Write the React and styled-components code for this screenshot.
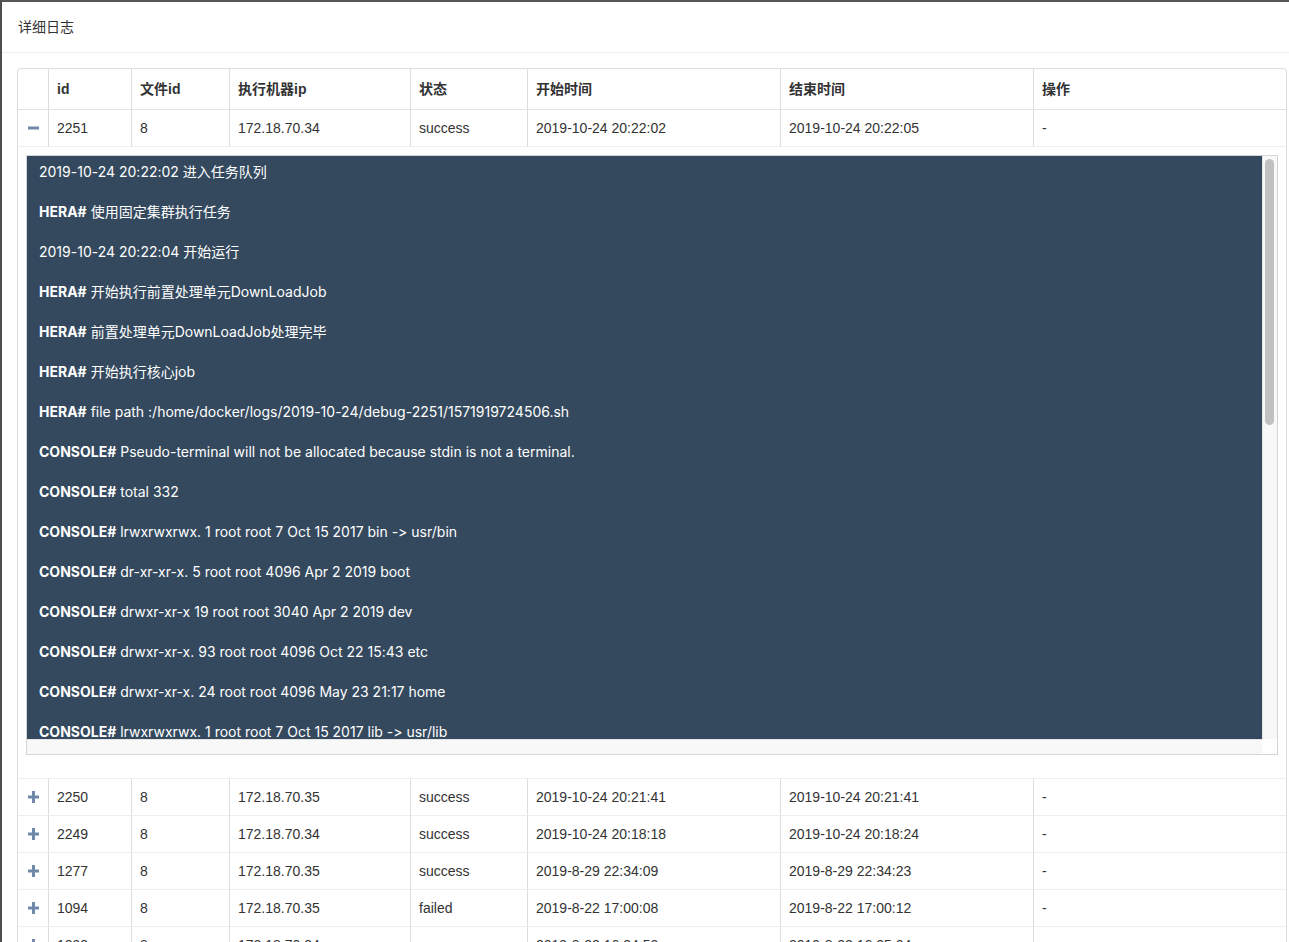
import React from "react";
import styled, { createGlobalStyle } from "styled-components";

const Global = createGlobalStyle`
  html, body { margin: 0; padding: 0; height: 100%; overflow: hidden; background: #fff; }
  body { font-family: "Liberation Sans", "Noto Sans CJK SC", Arial, sans-serif; color: #333; }
  #root { height: 100%; }
`;

const Frame = styled.div`
  height: 100%;
  box-sizing: border-box;
  border-top: 2px solid #565656;
  border-left: 2px solid #4e4e4e;
  display: flex;
  flex-direction: column;
`;

const Header = styled.div`
  padding: 15px 16px;
  line-height: 20px;
  font-size: 14px;
  color: #333;
  border-bottom: 1px solid #eeeeee;
`;

const Body = styled.div`
  padding: 15px 2px 0 15px;
`;

const TableWrap = styled.div`
  border: 1px solid #dddddd;
  border-radius: 4px;
  overflow: hidden;
`;

const Table = styled.table`
  width: 100%;
  table-layout: fixed;
  border-collapse: separate;
  border-spacing: 0;
  font-size: 14px;
  color: #333;
`;

const Th = styled.th`
  text-align: left;
  font-weight: bold;
  padding: 10px 8px;
  line-height: 20px;
  border-bottom: 1px solid #e2e2e2;
  border-left: ${(p) => (p.$first ? "none" : "1px solid #dddddd")};
  white-space: nowrap;
`;

const Td = styled.td`
  padding: 8px;
  line-height: 20px;
  border-bottom: 1px solid #eeeeee;
  border-left: ${(p) => (p.$first ? "none" : "1px solid #dddddd")};
  white-space: nowrap;
  overflow: hidden;
  vertical-align: middle;
`;

const ToggleCell = styled(Td)`
  padding: 8px 0 8px 10px;
`;

const Toggle = styled.svg`
  display: block;
  width: 11px;
  height: 12px;
  fill: #7189a9;
`;

const DetailCell = styled.td`
  padding: 8px 8px 23px 8px;
  border-bottom: 1px solid #eeeeee;
`;

const LogBox = styled.div`
  height: 600px;
  box-sizing: border-box;
  border: 1px solid #d3d3d9;
  display: grid;
  grid-template-columns: 1fr 15px;
  grid-template-rows: 1fr 15px;
  background: #fff;
`;

const Viewport = styled.div`
  background: #34495e;
  overflow: hidden;
  padding: 6px 12px 0 12px;
  color: #fff;
  font-family: "Inter", "Noto Sans CJK SC", sans-serif;
  font-size: 14px;
  font-feature-settings: "calt" 0, "liga" 0;
  font-variant-ligatures: none;
`;

const VTrack = styled.div`
  background: #f8f8f8;
  border-left: 1px solid #e4e4e4;
  padding: 3px 3px 0 2px;
`;

const Thumb = styled.div`
  height: 266px;
  border-radius: 5px;
  background: #c1c1c1;
`;

const HTrack = styled.div`
  background: #f8f8f8;
  border-top: 1px solid #e4e4e4;
`;

const Corner = styled.div`
  background: #fff;
`;

const LogLine = styled.div`
  line-height: 20px;
  margin-bottom: 20px;
  white-space: pre;
`;

const Tag = styled.b`
  font-weight: 700;
`;

const logs = [
  "2019-10-24 20:22:02 进入任务队列",
  "HERA# 使用固定集群执行任务",
  "2019-10-24 20:22:04 开始运行",
  "HERA# 开始执行前置处理单元DownLoadJob",
  "HERA# 前置处理单元DownLoadJob处理完毕",
  "HERA# 开始执行核心job",
  "HERA# file path :/home/docker/logs/2019-10-24/debug-2251/1571919724506.sh",
  "CONSOLE# Pseudo-terminal will not be allocated because stdin is not a terminal.",
  "CONSOLE# total 332",
  "CONSOLE# lrwxrwxrwx. 1 root root 7 Oct 15 2017 bin -> usr/bin",
  "CONSOLE# dr-xr-xr-x. 5 root root 4096 Apr 2 2019 boot",
  "CONSOLE# drwxr-xr-x 19 root root 3040 Apr 2 2019 dev",
  "CONSOLE# drwxr-xr-x. 93 root root 4096 Oct 22 15:43 etc",
  "CONSOLE# drwxr-xr-x. 24 root root 4096 May 23 21:17 home",
  "CONSOLE# lrwxrwxrwx. 1 root root 7 Oct 15 2017 lib -> usr/lib",
];

const rows = [
  ["2251", "8", "172.18.70.34", "success", "2019-10-24 20:22:02", "2019-10-24 20:22:05", "-"],
  ["2250", "8", "172.18.70.35", "success", "2019-10-24 20:21:41", "2019-10-24 20:21:41", "-"],
  ["2249", "8", "172.18.70.34", "success", "2019-10-24 20:18:18", "2019-10-24 20:18:24", "-"],
  ["1277", "8", "172.18.70.35", "success", "2019-8-29 22:34:09", "2019-8-29 22:34:23", "-"],
  ["1094", "8", "172.18.70.35", "failed", "2019-8-22 17:00:08", "2019-8-22 17:00:12", "-"],
  ["1093", "8", "172.18.70.34", "success", "2019-8-22 16:24:53", "2019-8-22 16:25:04", "-"],
];

const widths = [30, 83, 98, 181, 117, 253, 253, 253];
const headers = ["", "id", "文件id", "执行机器ip", "状态", "开始时间", "结束时间", "操作"];

function Icon({ open }) {
  return (
    <Toggle viewBox="0 0 11 12">
      {open ? (
        <rect x="0" y="4.5" width="11" height="3" rx="0.5" />
      ) : (
        <path d="M4 0h3v4.5h4v3H7V12H4V7.5H0v-3h4z" />
      )}
    </Toggle>
  );
}

function renderLog(line) {
  const m = line.match(/^(HERA#|CONSOLE#)(.*)$/);
  if (m) {
    return (
      <>
        <Tag>{m[1]}</Tag>
        {m[2]}
      </>
    );
  }
  return line;
}

function DataRow({ row, open }) {
  return (
    <tr>
      <ToggleCell $first>
        <Icon open={open} />
      </ToggleCell>
      {row.map((c, i) => (
        <Td key={i}>{c}</Td>
      ))}
    </tr>
  );
}

export default function App() {
  return (
    <>
      <Global />
      <Frame>
        <Header>详细日志</Header>
        <Body>
          <TableWrap>
            <Table>
              <colgroup>
                {widths.map((w, i) => (
                  <col key={i} style={{ width: w }} />
                ))}
              </colgroup>
              <thead>
                <tr>
                  {headers.map((h, i) => (
                    <Th key={i} $first={i === 0}>
                      {h}
                    </Th>
                  ))}
                </tr>
              </thead>
              <tbody>
                <DataRow row={rows[0]} open />
                <tr>
                  <DetailCell colSpan={8}>
                    <LogBox>
                      <Viewport>
                        {logs.map((l, i) => (
                          <LogLine key={i}>{renderLog(l)}</LogLine>
                        ))}
                      </Viewport>
                      <VTrack>
                        <Thumb />
                      </VTrack>
                      <HTrack />
                      <Corner />
                    </LogBox>
                  </DetailCell>
                </tr>
                {rows.slice(1).map((r, i) => (
                  <DataRow key={i} row={r} />
                ))}
              </tbody>
            </Table>
          </TableWrap>
        </Body>
      </Frame>
    </>
  );
}
